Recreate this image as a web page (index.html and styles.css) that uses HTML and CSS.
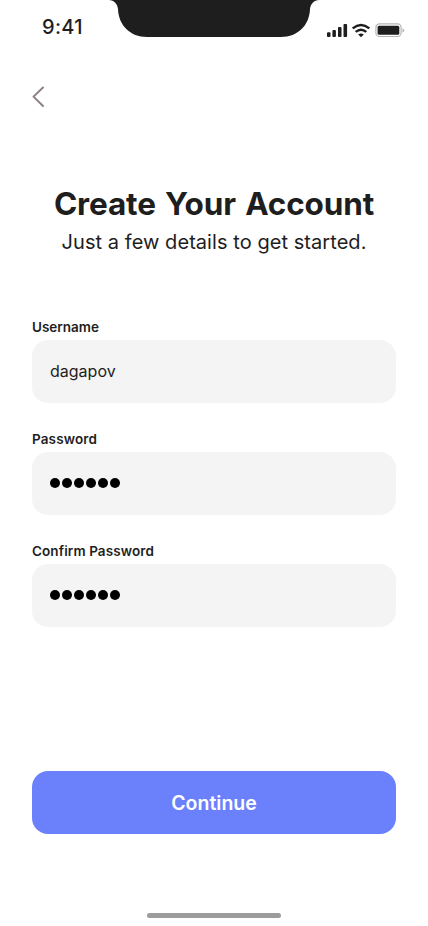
FILE: index.html
```html
<!DOCTYPE html>
<html lang="en">
<head>
<meta charset="utf-8">
<meta name="viewport" content="width=device-width, initial-scale=1">
<title>Create Your Account</title>
<link rel="stylesheet" href="styles.css">
</head>
<body>
<div class="screen">
  <header class="status">
    <span class="time">9:41</span>
    <svg class="notch" width="210" height="37" viewBox="0 0 210 37"><path d="M0 0C5 0 8.500 4 9 9C9.500 25 21 37 38 37H172C189 37 200.500 25 201 9C201.500 4 205 0 210 0Z" fill="#1e1e1e"/></svg>
    <svg class="signals" width="78" height="14" viewBox="0 0 78 14">
      <g fill="#1e1e1e">
        <rect x="0" y="8.300" width="3.500" height="4.700" rx=".9"/>
        <rect x="5.400" y="6" width="3.500" height="7" rx=".9"/>
        <rect x="11" y="3" width="3.500" height="10" rx=".9"/>
        <rect x="16.500" y="0" width="3.600" height="13" rx=".9"/>
      </g>
      <g fill="none" stroke="#1e1e1e" stroke-width="2.500">
        <path d="M25.700 4.400Q34 -2.400 42.300 4.400"/>
        <path d="M28.700 7.900Q34 3.500 39.300 7.900"/>
      </g>
      <path d="M31.200 10.600Q34 8.200 36.800 10.600L34 13.200Z" fill="#1e1e1e"/>
      <rect x="48.900" y="-.1" width="25.200" height="12.600" rx="3.600" fill="none" stroke="#b5b5b5" stroke-width="1.200"/>
      <rect x="50.600" y="1.700" width="21.700" height="9" rx="1.500" fill="#1e1e1e"/>
      <path d="M75.500 4.200Q77.300 5 77.300 6.400T75.500 8.600Z" fill="#b5b5b5"/>
    </svg>
  </header>
  <a class="back" href="#" aria-label="Back">
    <svg width="14" height="24" viewBox="0 0 14 24"><path d="M11 2.500L1.500 11.600L11 21" fill="none" stroke="#8d8184" stroke-width="2" stroke-linecap="round" stroke-linejoin="round"/></svg>
  </a>
  <main>
    <h1>Create Your Account</h1>
    <p class="lead">Just a few details to get started.</p>
    <div class="form">
      <div class="field">
        <div class="label username">Username</div>
        <div class="box">dagapov</div>
      </div>
      <div class="field">
        <div class="label password">Password</div>
        <div class="box dots"><i></i><i></i><i></i><i></i><i></i><i></i></div>
      </div>
      <div class="field">
        <div class="label confirm">Confirm Password</div>
        <div class="box dots"><i></i><i></i><i></i><i></i><i></i><i></i></div>
      </div>
    </div>
    <button class="continue" type="button">Continue</button>
  </main>
  <div class="home"></div>
</div>
</body>
</html>
```
FILE: styles.css
```css
* { box-sizing: border-box; }
body { margin: 0; background: #fff; color: #1e1e1e; font-family: Inter, "Liberation Sans", sans-serif; }
.screen { width: 428px; height: 926px; display: flex; flex-direction: column; overflow: hidden; }
.status { height: 48px; display: flex; align-items: flex-start; flex: none; }
.time { width: 67px; margin-left: 42px; padding-top: 15px; font-size: 20px; line-height: 24px; font-weight: 500; letter-spacing: 0.3px; }
.notch { flex: none; }
.signals { flex: none; margin: 24px 0 0 8px; overflow: visible; }
.back { width: 14px; height: 24px; margin: 37px 0 0 32px; }
.back svg { display: block; }
main { display: flex; flex-direction: column; padding: 0 32px; margin-top: 75px; }
h1 { margin: 0; text-align: center; font-size: 31.500px; line-height: 40px; font-weight: 700; word-spacing: 2px; letter-spacing: -0.150px; white-space: nowrap; }
.lead { margin: 4px 0 0; text-align: center; font-size: 20px; line-height: 28px; letter-spacing: 0.060px; white-space: nowrap; }
.form { display: flex; flex-direction: column; gap: 28px; margin-top: 62px; }
.field { height: 85px; display: flex; flex-direction: column; justify-content: space-between; }
.field + .field { margin-top: -1px; }
.label { font-size: 13.500px; line-height: 18px; font-weight: 600; }
.username { letter-spacing: 0; }
.password { letter-spacing: 0.130px; }
.confirm { letter-spacing: 0.100px; }
.box { height: 63px; display: flex; align-items: center; padding: 0 18px 2px; border-radius: 16px; background: #f4f4f4; font-size: 16px; }
.dots { gap: 2px; }
.dots i { width: 10px; height: 10px; border-radius: 50%; background: #000; }
.continue { height: 63px; margin-top: 144px; padding: 0; border: 0; border-radius: 16px; background: #6b81fc; color: #fff; font: 600 19.500px/28px Inter, "Liberation Sans", sans-serif; letter-spacing: 0; }
.home { width: 134px; height: 5px; margin: 79px 0 0 147px; border-radius: 3px; background: #9c9c9c; }
```
